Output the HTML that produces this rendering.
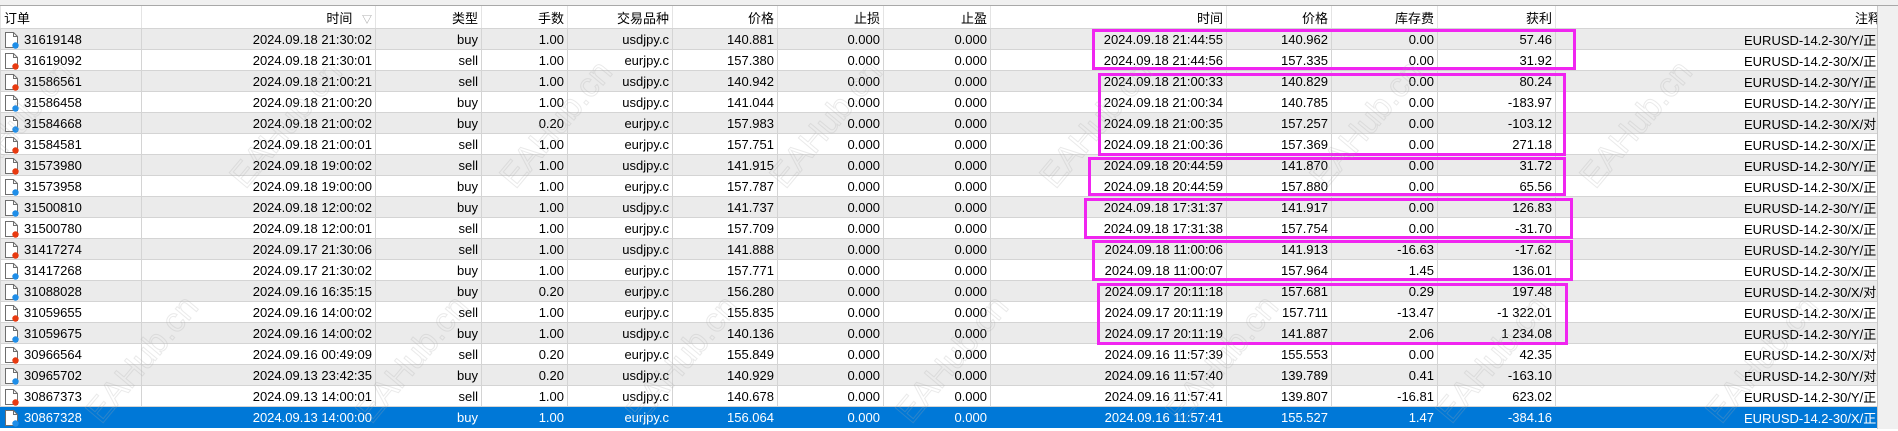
<!DOCTYPE html>
<html><head><meta charset="utf-8"><style>
body{margin:0;width:1898px;height:429px;overflow:hidden;background:#fff;font-family:"Liberation Sans","Noto Sans CJK SC",sans-serif;font-size:13px;color:#000;position:relative}
.top{position:absolute;left:0;top:0;width:1898px;height:5px;background:#f0f0f0;border-bottom:1px solid #a8a8a8}
table{position:absolute;left:0;top:6px;border-collapse:collapse;table-layout:fixed;width:1877px}
td,th{height:20px;padding:0 3px;border:1px solid #d4d4d4;border-top:none;text-align:right;white-space:nowrap;overflow:hidden;font-weight:normal}
th{height:22px;border-color:#e4e4e4;border-bottom:1px solid #d4d4d4}
tr:nth-child(even) td{background:#ebebeb}
tr.sel td{background:#0078d7;color:#fff;border-color:#0078d7}
td.o{text-align:left;padding-left:23px;position:relative}
td.c{text-align:left;padding-left:188px}
svg.ic{position:absolute;left:3px;top:2px}
.sb{position:absolute;left:1877px;top:6px;width:21px;height:423px;background:#f0f0f0;border-left:1px solid #c8c8c8}
.box{position:absolute;border:3px solid #f025f0;box-sizing:border-box}
.wm{position:absolute;font-size:34px;color:transparent;-webkit-text-stroke:1px rgba(170,170,170,.25);transform:rotate(-50deg);white-space:nowrap;font-family:"Liberation Sans",sans-serif}
</style></head><body>
<svg width="0" height="0" style="position:absolute"><defs>
<symbol id="pb" viewBox="0 0 16 18"><path d="M1.5 1.5h8l4 4v11h-12z" fill="#fff" stroke="#6e6e6e"/><path d="M9.5 1.5v4h4" fill="none" stroke="#6e6e6e"/><circle cx="11.5" cy="14.5" r="3.2" fill="#1f8ee8"/></symbol>
<symbol id="pr" viewBox="0 0 16 18"><path d="M1.5 1.5h8l4 4v11h-12z" fill="#fff" stroke="#6e6e6e"/><path d="M9.5 1.5v4h4" fill="none" stroke="#6e6e6e"/><circle cx="11.5" cy="14.5" r="3.2" fill="#e83a10"/></symbol>
</defs></svg>
<div class="top"></div>
<table>
<colgroup><col style="width:141px"><col style="width:234px"><col style="width:106px"><col style="width:86px"><col style="width:105px"><col style="width:105px"><col style="width:106px"><col style="width:107px"><col style="width:236px"><col style="width:105px"><col style="width:106px"><col style="width:118px"><col style="width:322px"></colgroup>
<tr><th style="text-align:left">订单</th><th>时间 <span style="color:#999;font-size:10px;padding-left:6px">▽</span></th><th>类型</th><th>手数</th><th>交易品种</th><th>价格</th><th>止损</th><th>止盈</th><th>时间</th><th>价格</th><th>库存费</th><th>获利</th><th style="text-align:left;padding-left:299px">注释</th></tr>
<tr><td class="o"><svg class="ic" width="16" height="18"><use href="#pb"/></svg>31619148</td><td>2024.09.18 21:30:02</td><td>buy</td><td>1.00</td><td>usdjpy.c</td><td>140.881</td><td>0.000</td><td>0.000</td><td>2024.09.18 21:44:55</td><td>140.962</td><td>0.00</td><td>57.46</td><td class="c">EURUSD-14.2-30/Y/正常</td></tr>
<tr><td class="o"><svg class="ic" width="16" height="18"><use href="#pr"/></svg>31619092</td><td>2024.09.18 21:30:01</td><td>sell</td><td>1.00</td><td>eurjpy.c</td><td>157.380</td><td>0.000</td><td>0.000</td><td>2024.09.18 21:44:56</td><td>157.335</td><td>0.00</td><td>31.92</td><td class="c">EURUSD-14.2-30/X/正常</td></tr>
<tr><td class="o"><svg class="ic" width="16" height="18"><use href="#pr"/></svg>31586561</td><td>2024.09.18 21:00:21</td><td>sell</td><td>1.00</td><td>usdjpy.c</td><td>140.942</td><td>0.000</td><td>0.000</td><td>2024.09.18 21:00:33</td><td>140.829</td><td>0.00</td><td>80.24</td><td class="c">EURUSD-14.2-30/Y/正常</td></tr>
<tr><td class="o"><svg class="ic" width="16" height="18"><use href="#pb"/></svg>31586458</td><td>2024.09.18 21:00:20</td><td>buy</td><td>1.00</td><td>usdjpy.c</td><td>141.044</td><td>0.000</td><td>0.000</td><td>2024.09.18 21:00:34</td><td>140.785</td><td>0.00</td><td>-183.97</td><td class="c">EURUSD-14.2-30/Y/正常</td></tr>
<tr><td class="o"><svg class="ic" width="16" height="18"><use href="#pb"/></svg>31584668</td><td>2024.09.18 21:00:02</td><td>buy</td><td>0.20</td><td>eurjpy.c</td><td>157.983</td><td>0.000</td><td>0.000</td><td>2024.09.18 21:00:35</td><td>157.257</td><td>0.00</td><td>-103.12</td><td class="c">EURUSD-14.2-30/X/对冲</td></tr>
<tr><td class="o"><svg class="ic" width="16" height="18"><use href="#pr"/></svg>31584581</td><td>2024.09.18 21:00:01</td><td>sell</td><td>1.00</td><td>eurjpy.c</td><td>157.751</td><td>0.000</td><td>0.000</td><td>2024.09.18 21:00:36</td><td>157.369</td><td>0.00</td><td>271.18</td><td class="c">EURUSD-14.2-30/X/正常</td></tr>
<tr><td class="o"><svg class="ic" width="16" height="18"><use href="#pr"/></svg>31573980</td><td>2024.09.18 19:00:02</td><td>sell</td><td>1.00</td><td>usdjpy.c</td><td>141.915</td><td>0.000</td><td>0.000</td><td>2024.09.18 20:44:59</td><td>141.870</td><td>0.00</td><td>31.72</td><td class="c">EURUSD-14.2-30/Y/正常</td></tr>
<tr><td class="o"><svg class="ic" width="16" height="18"><use href="#pb"/></svg>31573958</td><td>2024.09.18 19:00:00</td><td>buy</td><td>1.00</td><td>eurjpy.c</td><td>157.787</td><td>0.000</td><td>0.000</td><td>2024.09.18 20:44:59</td><td>157.880</td><td>0.00</td><td>65.56</td><td class="c">EURUSD-14.2-30/X/正常</td></tr>
<tr><td class="o"><svg class="ic" width="16" height="18"><use href="#pb"/></svg>31500810</td><td>2024.09.18 12:00:02</td><td>buy</td><td>1.00</td><td>usdjpy.c</td><td>141.737</td><td>0.000</td><td>0.000</td><td>2024.09.18 17:31:37</td><td>141.917</td><td>0.00</td><td>126.83</td><td class="c">EURUSD-14.2-30/Y/正常</td></tr>
<tr><td class="o"><svg class="ic" width="16" height="18"><use href="#pr"/></svg>31500780</td><td>2024.09.18 12:00:01</td><td>sell</td><td>1.00</td><td>eurjpy.c</td><td>157.709</td><td>0.000</td><td>0.000</td><td>2024.09.18 17:31:38</td><td>157.754</td><td>0.00</td><td>-31.70</td><td class="c">EURUSD-14.2-30/X/正常</td></tr>
<tr><td class="o"><svg class="ic" width="16" height="18"><use href="#pr"/></svg>31417274</td><td>2024.09.17 21:30:06</td><td>sell</td><td>1.00</td><td>usdjpy.c</td><td>141.888</td><td>0.000</td><td>0.000</td><td>2024.09.18 11:00:06</td><td>141.913</td><td>-16.63</td><td>-17.62</td><td class="c">EURUSD-14.2-30/Y/正常</td></tr>
<tr><td class="o"><svg class="ic" width="16" height="18"><use href="#pb"/></svg>31417268</td><td>2024.09.17 21:30:02</td><td>buy</td><td>1.00</td><td>eurjpy.c</td><td>157.771</td><td>0.000</td><td>0.000</td><td>2024.09.18 11:00:07</td><td>157.964</td><td>1.45</td><td>136.01</td><td class="c">EURUSD-14.2-30/X/正常</td></tr>
<tr><td class="o"><svg class="ic" width="16" height="18"><use href="#pb"/></svg>31088028</td><td>2024.09.16 16:35:15</td><td>buy</td><td>0.20</td><td>eurjpy.c</td><td>156.280</td><td>0.000</td><td>0.000</td><td>2024.09.17 20:11:18</td><td>157.681</td><td>0.29</td><td>197.48</td><td class="c">EURUSD-14.2-30/X/对冲</td></tr>
<tr><td class="o"><svg class="ic" width="16" height="18"><use href="#pr"/></svg>31059655</td><td>2024.09.16 14:00:02</td><td>sell</td><td>1.00</td><td>eurjpy.c</td><td>155.835</td><td>0.000</td><td>0.000</td><td>2024.09.17 20:11:19</td><td>157.711</td><td>-13.47</td><td>-1 322.01</td><td class="c">EURUSD-14.2-30/X/正常</td></tr>
<tr><td class="o"><svg class="ic" width="16" height="18"><use href="#pb"/></svg>31059675</td><td>2024.09.16 14:00:02</td><td>buy</td><td>1.00</td><td>usdjpy.c</td><td>140.136</td><td>0.000</td><td>0.000</td><td>2024.09.17 20:11:19</td><td>141.887</td><td>2.06</td><td>1 234.08</td><td class="c">EURUSD-14.2-30/Y/正常</td></tr>
<tr><td class="o"><svg class="ic" width="16" height="18"><use href="#pr"/></svg>30966564</td><td>2024.09.16 00:49:09</td><td>sell</td><td>0.20</td><td>eurjpy.c</td><td>155.849</td><td>0.000</td><td>0.000</td><td>2024.09.16 11:57:39</td><td>155.553</td><td>0.00</td><td>42.35</td><td class="c">EURUSD-14.2-30/X/对冲</td></tr>
<tr><td class="o"><svg class="ic" width="16" height="18"><use href="#pb"/></svg>30965702</td><td>2024.09.13 23:42:35</td><td>buy</td><td>0.20</td><td>usdjpy.c</td><td>140.929</td><td>0.000</td><td>0.000</td><td>2024.09.16 11:57:40</td><td>139.789</td><td>0.41</td><td>-163.10</td><td class="c">EURUSD-14.2-30/Y/对冲</td></tr>
<tr><td class="o"><svg class="ic" width="16" height="18"><use href="#pr"/></svg>30867373</td><td>2024.09.13 14:00:01</td><td>sell</td><td>1.00</td><td>usdjpy.c</td><td>140.678</td><td>0.000</td><td>0.000</td><td>2024.09.16 11:57:41</td><td>139.807</td><td>-16.81</td><td>623.02</td><td class="c">EURUSD-14.2-30/Y/正常</td></tr>
<tr class="sel"><td class="o"><svg class="ic" width="16" height="18"><use href="#pb"/></svg>30867328</td><td>2024.09.13 14:00:00</td><td>buy</td><td>1.00</td><td>eurjpy.c</td><td>156.064</td><td>0.000</td><td>0.000</td><td>2024.09.16 11:57:41</td><td>155.527</td><td>1.47</td><td>-384.16</td><td class="c">EURUSD-14.2-30/X/正常</td></tr>
</table>
<div class="sb"></div>
<div class="box" style="left:1092px;top:29px;width:484px;height:41px"></div>
<div class="box" style="left:1098px;top:73px;width:468px;height:83px"></div>
<div class="box" style="left:1088px;top:157px;width:478px;height:39px"></div>
<div class="box" style="left:1084px;top:198px;width:489px;height:41px"></div>
<div class="box" style="left:1092px;top:240px;width:481px;height:41px"></div>
<div class="box" style="left:1097px;top:283px;width:471px;height:62px"></div>
<div class="wm" style="left:-60px;top:105px">EAHub.cn</div>
<div class="wm" style="left:210px;top:105px">EAHub.cn</div>
<div class="wm" style="left:480px;top:105px">EAHub.cn</div>
<div class="wm" style="left:750px;top:105px">EAHub.cn</div>
<div class="wm" style="left:1020px;top:105px">EAHub.cn</div>
<div class="wm" style="left:1290px;top:105px">EAHub.cn</div>
<div class="wm" style="left:1560px;top:105px">EAHub.cn</div>
<div class="wm" style="left:66px;top:340px">EAHub.cn</div>
<div class="wm" style="left:336px;top:340px">EAHub.cn</div>
<div class="wm" style="left:606px;top:340px">EAHub.cn</div>
<div class="wm" style="left:876px;top:340px">EAHub.cn</div>
<div class="wm" style="left:1146px;top:340px">EAHub.cn</div>
<div class="wm" style="left:1416px;top:340px">EAHub.cn</div>
<div class="wm" style="left:1686px;top:340px">EAHub.cn</div>
</body></html>
